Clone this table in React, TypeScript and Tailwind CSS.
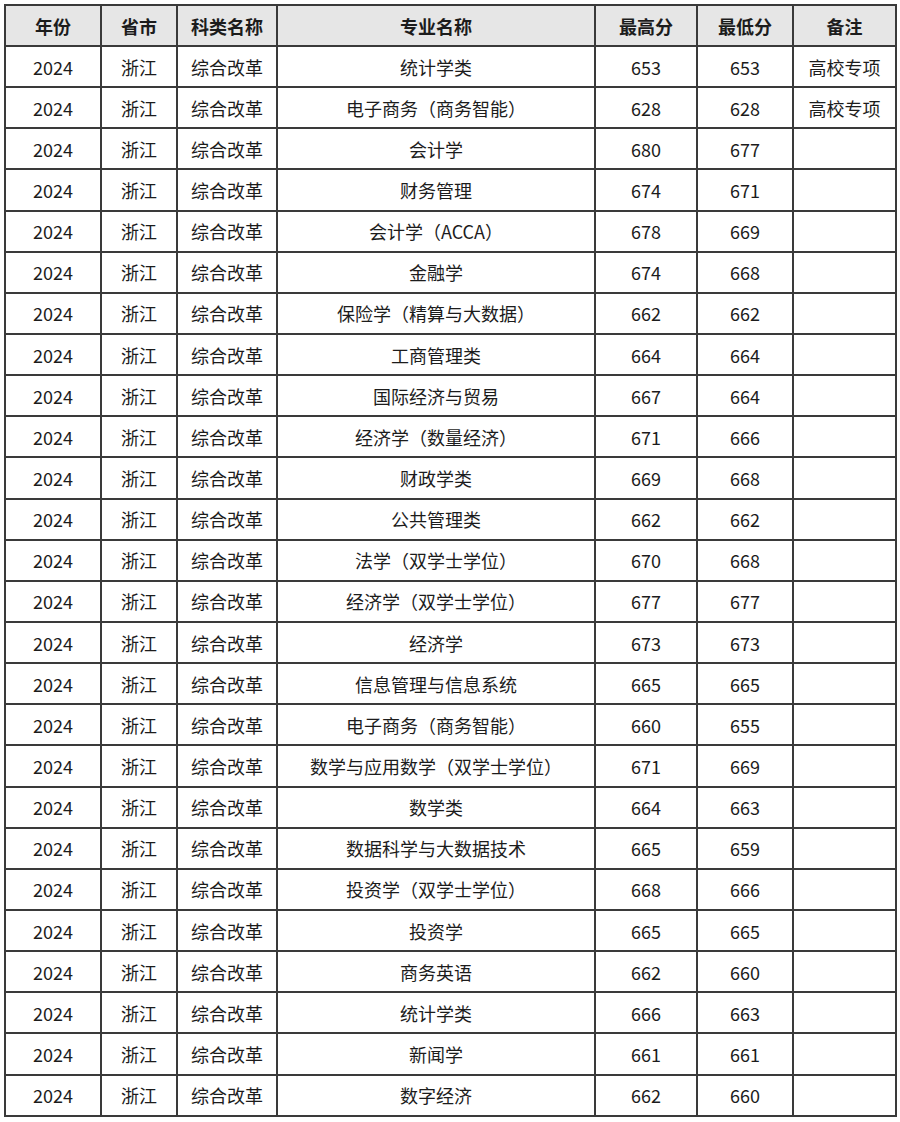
import React from "react";

const rows: [string, string, string, string][] = [
  ["统计学类", "653", "653", "高校专项"],
  ["电子商务（商务智能）", "628", "628", "高校专项"],
  ["会计学", "680", "677", ""],
  ["财务管理", "674", "671", ""],
  ["会计学（ACCA）", "678", "669", ""],
  ["金融学", "674", "668", ""],
  ["保险学（精算与大数据）", "662", "662", ""],
  ["工商管理类", "664", "664", ""],
  ["国际经济与贸易", "667", "664", ""],
  ["经济学（数量经济）", "671", "666", ""],
  ["财政学类", "669", "668", ""],
  ["公共管理类", "662", "662", ""],
  ["法学（双学士学位）", "670", "668", ""],
  ["经济学（双学士学位）", "677", "677", ""],
  ["经济学", "673", "673", ""],
  ["信息管理与信息系统", "665", "665", ""],
  ["电子商务（商务智能）", "660", "655", ""],
  ["数学与应用数学（双学士学位）", "671", "669", ""],
  ["数学类", "664", "663", ""],
  ["数据科学与大数据技术", "665", "659", ""],
  ["投资学（双学士学位）", "668", "666", ""],
  ["投资学", "665", "665", ""],
  ["商务英语", "662", "660", ""],
  ["统计学类", "666", "663", ""],
  ["新闻学", "661", "661", ""],
  ["数字经济", "662", "660", ""],
];

const headers = ["年份", "省市", "科类名称", "专业名称", "最高分", "最低分", "备注"];
const widths = ["w-[96px]", "w-[76px]", "w-[100px]", "w-[318px]", "w-[102px]", "w-[96px]", "w-[103px]"];

export default function App() {
  return (
    <div
      className="w-[900px] h-[1122px] bg-white pl-[4px] pt-[4px]"
      style={{ fontFamily: '"Noto Sans CJK SC", "Noto Sans", sans-serif' }}
    >
      <table className="w-[891px] h-[1113px] border-collapse table-fixed text-[18px] text-[#1c1c1c]">
        <colgroup>
          {widths.map((w, i) => (
            <col key={i} className={w} />
          ))}
        </colgroup>
        <thead>
          <tr className="bg-[#e6e6e6] h-[41px]">
            {headers.map((h) => (
              <th key={h} className="border-2 border-[#3a3a3a] font-bold text-center p-0 leading-none">
                {h}
              </th>
            ))}
          </tr>
        </thead>
        <tbody>
          {rows.map((r, i) => (
            <tr key={i} className="h-[41px]">
              <td className="border-2 border-[#3a3a3a] text-center p-0 leading-none">2024</td>
              <td className="border-2 border-[#3a3a3a] text-center p-0 leading-none">浙江</td>
              <td className="border-2 border-[#3a3a3a] text-center p-0 leading-none">综合改革</td>
              <td className="border-2 border-[#3a3a3a] text-center p-0 leading-none">{r[0]}</td>
              <td className="border-2 border-[#3a3a3a] text-center p-0 leading-none">{r[1]}</td>
              <td className="border-2 border-[#3a3a3a] text-center p-0 leading-none">{r[2]}</td>
              <td className="border-2 border-[#3a3a3a] text-center p-0 leading-none">{r[3]}</td>
            </tr>
          ))}
        </tbody>
      </table>
    </div>
  );
}
